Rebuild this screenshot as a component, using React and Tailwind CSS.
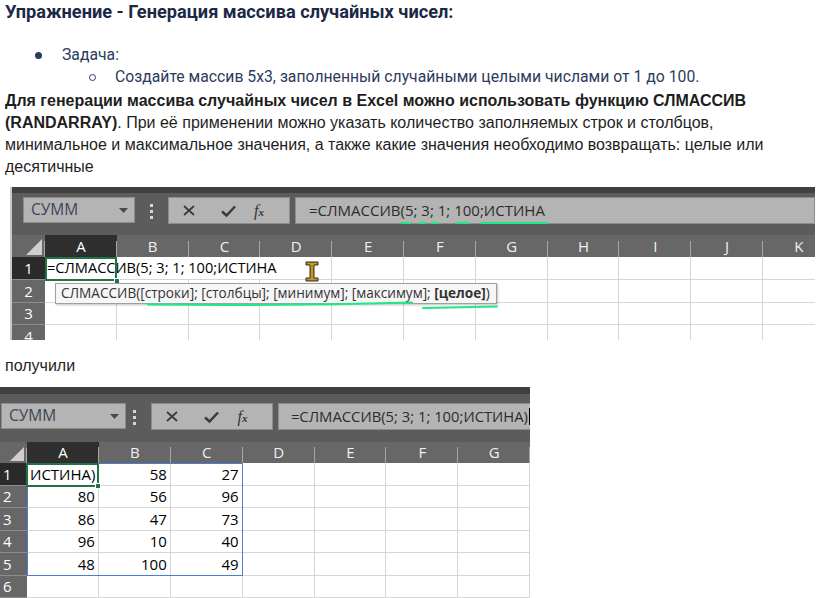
import React from "react";

const GREEN = "#1fe884";
const cellFont = { fontFamily: '"Open Sans", "Noto Sans", sans-serif' };

function NameBox({ className }) {
  return (
    <div className={`h-[26px] bg-[#b4b4b4] border border-[#8c8c8c] flex items-center justify-between pr-[6px] ${className}`}>
      <span className="text-[15.5px] text-[#3d4656] leading-none">СУММ</span>
      <svg width="9" height="5" viewBox="0 0 9 5"><path d="M0 0 H9 L4.5 5 Z" fill="#4a4a4a" /></svg>
    </div>
  );
}

function Dots({ className }) {
  return (
    <div className={`flex flex-col gap-[3px] pt-[7px] ${className}`}>
      <div className="w-[3px] h-[3px] bg-[#d6d6d6]" />
      <div className="w-[3px] h-[3px] bg-[#d6d6d6]" />
      <div className="w-[3px] h-[3px] bg-[#d6d6d6]" />
    </div>
  );
}

function FxBox({ className }) {
  return (
    <div className={`h-[27px] w-[122px] bg-[#b4b4b4] border border-[#8c8c8c] flex items-center pl-[14px] ${className}`}>
      <svg width="12" height="11" viewBox="0 0 12 11">
        <path d="M1 1 L11 10 M11 1 L1 10" stroke="#3a3a3a" strokeWidth="1.7" />
      </svg>
      <svg className="ml-[26px]" width="15" height="12" viewBox="0 0 15 12">
        <path d="M1 6.5 L5.5 10.5 L14 1.5" stroke="#3a3a3a" strokeWidth="2.5" fill="none" />
      </svg>
      <span className="ml-[18px] text-[#333] leading-none" style={{ fontFamily: '"Liberation Serif", serif', fontStyle: "italic" }}>
        <span className="text-[16px]">f</span>
        <span className="text-[11px] font-bold">x</span>
      </span>
    </div>
  );
}

function ColHeader({ letter, w, selected, h }) {
  return (
    <div
      className={`relative flex items-center justify-center shrink-0 text-[15px] ${selected ? "bg-[#2e2e2e] text-white" : "text-[#f0f0f0]"}`}
      style={{ width: w, height: h }}
    >
      {letter}
      <div className="absolute right-0 bottom-0 w-px h-[16px] bg-[#a6a6a6]" />
    </div>
  );
}

function Excel1() {
  const cols = ["A", "B", "C", "D", "E", "F", "G", "H", "I", "J", "K"];
  const w = 71.8;
  const rows = [23, 23, 22, 23];
  return (
    <div className="relative ml-[10px] w-[805px] h-[153px] overflow-hidden bg-[#5c5c5c] border-l-2 border-[#c8c8c8] flex flex-col" style={cellFont}>
      <div className="h-[6px] shrink-0 bg-[#404040]" />
      <div className="h-[42px] shrink-0 flex items-start pt-[4px]">
        <NameBox className="ml-[11px] w-[112px] pl-[7px]" />
        <Dots className="ml-[15px]" />
        <FxBox className="ml-[15px]" />
        <div className="ml-[5px] flex-1 h-[27px] bg-[#b4b4b4] border border-[#8c8c8c] flex items-center pl-[13px] text-[15px] text-[#2c2c2c] whitespace-nowrap">
          =СЛМАССИВ(5; 3; 1; 100;ИСТИНА
        </div>
      </div>
      <div className="h-[22px] shrink-0 flex bg-[#676767]">
        <div className="relative w-[33px] shrink-0">
          <svg className="absolute right-[3px] bottom-[2px]" width="16" height="16" viewBox="0 0 16 16"><path d="M16 0 V16 H0 Z" fill="#cfcfcf" /></svg>
          <div className="absolute right-0 bottom-0 w-px h-[16px] bg-[#a6a6a6]" />
        </div>
        {cols.map((c) => (
          <ColHeader key={c} letter={c} w={w} selected={c === "A"} h={22} />
        ))}
      </div>
      {rows.map((h, ri) => (
        <div key={ri} className="flex shrink-0" style={{ height: h }}>
          <div className={`w-[33px] shrink-0 flex items-center justify-center text-[15px] text-white border-b border-[#8d8d8d] ${ri === 0 ? "bg-[#2a2a2a]" : "bg-[#676767]"}`}>
            {ri + 1}
          </div>
          {cols.map((c, ci) => {
            const noRight = ri === 0 && ci < 3;
            return (
              <div
                key={c}
                className={`relative shrink-0 bg-white border-b border-[#d6d6d6] ${noRight ? "" : "border-r"}`}
                style={{ width: w }}
              >
                {ri === 0 && ci === 0 && (
                  <span className="absolute left-[2px] top-0 h-full flex items-center z-10 whitespace-nowrap text-[14.6px] text-black">
                    =СЛМАССИВ(5; 3; 1; 100;ИСТИНА
                  </span>
                )}
              </div>
            );
          })}
        </div>
      ))}
      {/* A1 selection */}
      <div className="absolute left-[33px] top-[70px] w-[72px] h-[24px] border-2 border-[#217346] z-20 pointer-events-none" />
      <div className="absolute left-[102px] top-[91px] w-[6px] h-[6px] bg-[#217346] border border-white z-20" />
      {/* I-beam */}
      <svg className="absolute left-[293px] top-[74px] z-30" width="14" height="21" viewBox="0 0 14 21">
        <path d="M1 1 H13 V4 H9 V17 H13 V20 H1 V17 H5 V4 H1 Z" fill="#c7941d" stroke="#2a2a2a" strokeWidth="1" />
      </svg>
      {/* tooltip */}
      <div className="absolute left-[43px] top-[96px] w-[442px] h-[21px] bg-[#f6f6f6] border border-[#a0a0a0] shadow-[1px_1px_2px_rgba(0,0,0,0.25)] z-30 flex items-center pl-[5px] text-[13.6px] text-[#333] whitespace-pre">
        <span>СЛМАССИВ([строки]; [столбцы]; [минимум]; [максимум];{" "}</span>
        <b className="font-bold">[целое]</b>
        <span>)</span>
      </div>
      <svg className="absolute left-0 top-0 z-40 pointer-events-none" width="805" height="153">
        <g stroke={GREEN} strokeWidth="2" strokeLinecap="round" fill="none">
          <path d="M390 36 H398" />
          <path d="M407 36 H413" />
          <path d="M420 36 H426" />
          <path d="M445 36 H457" />
          <path d="M469 36 H535" />
          <path d="M136 117.5 Q270 119 400 115.5" />
          <path d="M411 121 L485 119.5" />
        </g>
      </svg>
    </div>
  );
}

function Excel2() {
  const cols = ["A", "B", "C", "D", "E", "F", "G"];
  const w = 71.9;
  const rows = [23, 22, 23, 22, 23, 22];
  const data = [
    ["ИСТИНА)", "58", "27"],
    ["80", "56", "96"],
    ["86", "47", "73"],
    ["96", "10", "40"],
    ["48", "100", "49"],
    [],
  ];
  return (
    <div className="relative w-[530px] h-[211px] overflow-hidden bg-[#5c5c5c] flex flex-col" style={cellFont}>
      <div className="h-[7px] shrink-0 bg-[#404040]" />
      <div className="h-[48px] shrink-0 flex items-start pt-[9px]">
        <NameBox className="ml-[1px] w-[126px] pl-[7px]" />
        <Dots className="ml-[7px]" />
        <FxBox className="ml-[15px]" />
        <div className="ml-[5px] flex-1 h-[27px] bg-[#b4b4b4] border border-r-0 border-[#8c8c8c] flex items-center pl-[12px] text-[14.8px] text-[#2c2c2c] whitespace-nowrap">
          =СЛМАССИВ(5; 3; 1; 100;ИСТИНА)
          <span className="ml-px w-px h-[17px] bg-black" />
        </div>
      </div>
      <div className="h-[21px] shrink-0 flex bg-[#676767]">
        <div className="relative w-[27px] shrink-0">
          <svg className="absolute right-[3px] bottom-[2px]" width="14" height="14" viewBox="0 0 16 16"><path d="M16 0 V16 H0 Z" fill="#cfcfcf" /></svg>
          <div className="absolute right-0 bottom-0 w-px h-[15px] bg-[#a6a6a6]" />
        </div>
        {cols.map((c) => (
          <ColHeader key={c} letter={c} w={w} selected={c === "A"} h={21} />
        ))}
      </div>
      {rows.map((h, ri) => (
        <div key={ri} className="flex shrink-0" style={{ height: h }}>
          <div className={`w-[27px] shrink-0 flex items-center pl-[3px] text-[15px] text-white border-b border-[#8d8d8d] ${ri === 0 ? "bg-[#2a2a2a]" : "bg-[#676767]"}`}>
            {ri + 1}
          </div>
          {cols.map((c, ci) => {
            const v = data[ri][ci];
            const left = ri === 0 && ci === 0;
            return (
              <div
                key={c}
                className={`shrink-0 bg-white border-b border-r border-[#d6d6d6] flex items-center text-[15px] text-black ${left ? "justify-start pl-[3px]" : "justify-end pr-[3px]"}`}
                style={{ width: w }}
              >
                {v}
              </div>
            );
          })}
        </div>
      ))}
      <div className="absolute left-[27px] top-[76px] w-[216px] h-[113px] border border-[#4a7ed6] z-10 pointer-events-none" />
      <div className="absolute left-[26px] top-[76px] w-[73px] h-[24px] border-2 border-[#217346] z-20 pointer-events-none" />
      <div className="absolute left-[95px] top-[96px] w-[6px] h-[6px] bg-[#217346] border border-white z-20" />
    </div>
  );
}

export default function App() {
  return (
    <div className="w-[823px] h-[598px] overflow-hidden bg-white">
      <div className="pl-[5px] h-[24px] flex items-center text-[18.2px] font-bold text-[#1b2846]" style={{ fontFamily: "Roboto, sans-serif" }}>
        Упражнение - Генерация массива случайных чисел:
      </div>
      <div className="mt-[20px] text-[15.75px] text-[#2c3b5e]" style={{ fontFamily: "Roboto, sans-serif" }}>
        <div className="h-[22px] flex items-center">
          <span className="ml-[35px] w-[7px] h-[7px] rounded-full bg-[#2c3b5e]" />
          <span className="ml-[20px]">Задача:</span>
        </div>
        <div className="h-[22px] flex items-center">
          <span className="ml-[89px] w-[7px] h-[7px] rounded-full border border-[#2c3b5e]" />
          <span className="ml-[19px]">Создайте массив 5x3, заполненный случайными целыми числами от 1 до 100.</span>
        </div>
      </div>
      <p className="mt-[2px] pl-[5px] pr-[20px] text-[16px] leading-[22px] text-[#1e1e1e]" style={{ fontFamily: '"Liberation Sans", Arial, sans-serif' }}>
        <b>Для генерации массива случайных чисел в Excel можно использовать функцию СЛМАССИВ (RANDARRAY)</b>. При её применении можно указать количество заполняемых строк и столбцов, минимальное и максимальное значения, а также какие значения необходимо возвращать: целые или десятичные
      </p>
      <div className="mt-[9px]">
        <Excel1 />
      </div>
      <div className="mt-[15px] pl-[5px] h-[22px] flex items-center text-[16px] text-[#1e1e1e]" style={{ fontFamily: '"Liberation Sans", Arial, sans-serif' }}>
        получили
      </div>
      <div className="mt-[10px]">
        <Excel2 />
      </div>
    </div>
  );
}
